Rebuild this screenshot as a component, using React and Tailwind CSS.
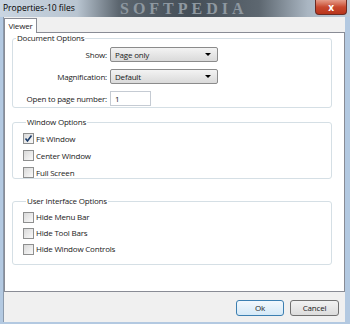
import React, { useState } from "react";

const CheckBox = ({ label, checked, onChange, h = "h-[17px]" }) => (
  <label className={`flex items-center ${h} cursor-default`} onClick={onChange}>
    <span className="w-[11px] h-[11px] border border-[#8e8f8f] bg-gradient-to-br from-[#d9d9d9] to-[#fafafa] flex items-center justify-center">
      {checked && (
        <svg width="9" height="9" viewBox="0 0 9 9">
          <path d="M1.5 4.5 L3.5 7 L7.5 1.5" fill="none" stroke="#1c3d6b" strokeWidth="1.6" />
        </svg>
      )}
    </span>
    <span className="ml-[2px] whitespace-nowrap">{label}</span>
  </label>
);

const Combo = ({ value }) => (
  <div className="w-[108px] h-[15px] border border-[#8b8b8b] rounded-[2px] bg-gradient-to-b from-[#f3f3f3] to-[#dadada] flex items-center justify-between pl-[4px] pr-[6px]">
    <span>{value}</span>
    <span className="w-0 h-0 border-l-[3px] border-r-[3px] border-t-[3px] border-l-transparent border-r-transparent border-t-black" />
  </div>
);

const Group = ({ title, className, children }) => (
  <fieldset className={`border border-[#d5dfe5] rounded-[3px] ${className}`}>
    <legend className="ml-[3px] px-[1px] leading-[10px]">{title}</legend>
    {children}
  </fieldset>
);

const App = () => {
  const [opts, setOpts] = useState({ fit: true, center: false, full: false, menu: false, tools: false, controls: false });
  const toggle = (k) => setOpts((p) => ({ ...p, [k]: !p[k] }));

  return (
    <div className="w-[350px] h-[324px] flex flex-col bg-[#b3c9e1] overflow-hidden font-['Open_Sans',sans-serif] text-[8px] tracking-[-0.2px] text-[#1a1a1a]">
      {/* Title bar */}
      <div className="relative h-[17px] flex items-start justify-between overflow-hidden bg-[linear-gradient(to_right,#c9d5e1_0%,#b9c5d1_22%,#5b656e_34%,#444e57_55%,#5d6770_74%,#aab6c2_88%,#bccad8_100%)]">
        <span className="absolute left-[120px] top-0 font-['Liberation_Serif',serif] font-bold text-[16px] tracking-[4px] text-[#8e98a0] leading-[17px]">
          SOFTPEDIA
        </span>
        <span className="relative pl-[3px] pt-[2px] text-[8.5px] tracking-normal text-black">Properties-10 files</span>
        <button className="relative mr-[3px] w-[32px] h-[15px] rounded-b-[4px] border border-[#6b2a22] border-t-0 bg-gradient-to-b from-[#e49b89] via-[#c8492f] to-[#b8341b] flex items-center justify-center text-white text-[10px] font-bold leading-none">
          x
        </button>
      </div>

      {/* Window body */}
      <div className="flex-1 flex flex-col ml-[3px] mr-[5px] mb-[2px] bg-[#f0f0f0] border-l border-[#8a99ab]">
        {/* Tab strip */}
        <div className="h-[15px] flex items-end">
          <div className="h-[15px] -mb-px w-[33px] bg-white border border-b-0 border-[#898c95] flex items-center justify-center relative z-10">
            Viewer
          </div>
        </div>

        {/* Tab panel */}
        <div className="h-[260px] bg-white border border-[#898c95] pl-[7px] pr-[12px]">
          <Group title="Document Options" className="h-[75px] pt-[3px]">
            <div className="flex flex-col gap-[7px] pt-[1px]">
              <div className="flex items-center">
                <span className="w-[94px] text-right whitespace-nowrap">Show:</span>
                <div className="ml-[3px]"><Combo value="Page only" /></div>
              </div>
              <div className="flex items-center">
                <span className="w-[94px] text-right whitespace-nowrap">Magnification:</span>
                <div className="ml-[3px]"><Combo value="Default" /></div>
              </div>
              <div className="flex items-center">
                <span className="w-[94px] text-right whitespace-nowrap">Open to page number:</span>
                <div className="ml-[3px] w-[41px] h-[15px] border border-[#c5cbd3] flex items-center pl-[4px] bg-white">1</div>
              </div>
            </div>
          </Group>

          <Group title="Window Options" className="mt-[9px] h-[62px] pl-[10px] pt-[3px]">
            <CheckBox label="Fit Window" checked={opts.fit} onChange={() => toggle("fit")} />
            <CheckBox label="Center Window" checked={opts.center} onChange={() => toggle("center")} />
            <CheckBox label="Full Screen" checked={opts.full} onChange={() => toggle("full")} />
          </Group>

          <Group title="User Interface Options" className="mt-[17px] h-[69px] pl-[10px] pt-[3px]">
            <CheckBox h="h-[16px]" label="Hide Menu Bar" checked={opts.menu} onChange={() => toggle("menu")} />
            <CheckBox h="h-[16px]" label="Hide Tool Bars" checked={opts.tools} onChange={() => toggle("tools")} />
            <CheckBox h="h-[16px]" label="Hide Window Controls" checked={opts.controls} onChange={() => toggle("controls")} />
          </Group>
        </div>

        {/* Footer */}
        <div className="flex-1 flex items-start justify-end gap-[6px] pt-[8px] pr-[6px]">
          <button className="w-[48px] h-[16px] rounded-[3px] border border-[#3c7fb1] bg-gradient-to-b from-[#f2f8fd] to-[#d5e9f7] leading-none">
            Ok
          </button>
          <button className="w-[49px] h-[16px] rounded-[3px] border border-[#707070] bg-gradient-to-b from-[#f2f2f2] to-[#dcdcdc] leading-none">
            Cancel
          </button>
        </div>
      </div>
    </div>
  );
};

export default App;
